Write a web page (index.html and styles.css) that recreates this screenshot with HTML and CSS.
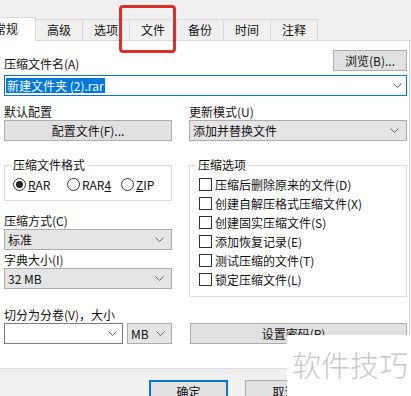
FILE: index.html
```html
<!DOCTYPE html>
<html lang="zh-CN">
<head>
    <meta charset="UTF-8">
    <title>压缩文件名和参数</title>
    <link rel="stylesheet" href="styles.css">
</head>
<body>

<div class="dialog">
    <div class="tabs">
        <div class="tab active">常规</div>
        <div class="tab">高级</div>
        <div class="tab">选项</div>
        <div class="tab">文件</div>
        <div class="tab">备份</div>
        <div class="tab">时间</div>
        <div class="tab">注释</div>
    </div>

    <div class="panel">
        <div class="name-row">
            <span class="lbl">压缩文件名(A)</span>
            <button class="btn browse">浏览(B)...</button>
        </div>
        <div class="combo name-combo">
            <span class="selected">新建文件夹 (2).rar</span>
            <svg class="chev" width="9" height="5" viewBox="0 0 9 5"><path d="M0.5 0.5 L4.5 4.5 L8.5 0.5"/></svg>
        </div>

        <div class="cols">
            <div class="col">
                <span class="lbl">默认配置</span>
                <button class="btn ctl">配置文件(F)...</button>

                <fieldset class="group group-format">
                    <legend>压缩文件格式</legend>
                    <div class="radios">
                        <label class="radio-item"><span class="radio checked"></span><span><u>R</u>AR</span></label>
                        <label class="radio-item"><span class="radio"></span><span>RAR<u>4</u></span></label>
                        <label class="radio-item"><span class="radio"></span><span><u>Z</u>IP</span></label>
                    </div>
                </fieldset>

                <span class="lbl gap-big">压缩方式(C)</span>
                <div class="select ctl">标准<svg class="chev" width="9" height="5" viewBox="0 0 9 5"><path d="M0.5 0.5 L4.5 4.5 L8.5 0.5"/></svg></div>

                <span class="lbl gap-small">字典大小(I)</span>
                <div class="select ctl">32 MB<svg class="chev" width="9" height="5" viewBox="0 0 9 5"><path d="M0.5 0.5 L4.5 4.5 L8.5 0.5"/></svg></div>
            </div>

            <div class="col">
                <span class="lbl">更新模式(U)</span>
                <div class="select ctl">添加并替换文件<svg class="chev" width="9" height="5" viewBox="0 0 9 5"><path d="M0.5 0.5 L4.5 4.5 L8.5 0.5"/></svg></div>

                <fieldset class="group group-options">
                    <legend>压缩选项</legend>
                    <label class="check-row"><span class="check"></span>压缩后删除原来的文件(D)</label>
                    <label class="check-row"><span class="check"></span>创建自解压格式压缩文件(X)</label>
                    <label class="check-row"><span class="check"></span>创建固实压缩文件(S)</label>
                    <label class="check-row"><span class="check"></span>添加恢复记录(E)</label>
                    <label class="check-row"><span class="check"></span>测试压缩的文件(T)</label>
                    <label class="check-row"><span class="check"></span>锁定压缩文件(L)</label>
                </fieldset>
            </div>
        </div>

        <span class="lbl split-label">切分为分卷(V)，大小</span>
        <div class="split-row">
            <div class="combo split-combo">
                <svg class="chev" width="9" height="5" viewBox="0 0 9 5"><path d="M0.5 0.5 L4.5 4.5 L8.5 0.5"/></svg>
            </div>
            <div class="select unit">MB<svg class="chev" width="9" height="5" viewBox="0 0 9 5"><path d="M0.5 0.5 L4.5 4.5 L8.5 0.5"/></svg></div>
            <button class="btn password">设置密码(P)...</button>
        </div>
    </div>

    <div class="footer">
        <button class="btn ok">确定</button>
        <button class="btn cancel">取消</button>
    </div>

    <div class="highlight"></div>
    <div class="watermark">软件技巧</div>
</div>

</body>
</html>
```

FILE: styles.css
```css
body { margin: 0; background: #f0f0f0; font-family: "Noto Sans CJK SC", "Noto Sans", sans-serif; font-size: 12px; color: #111; overflow: hidden; }
.dialog { position: relative; width: 411px; height: 396px; overflow: hidden; }

/* tab strip */
.tabs { display: flex; align-items: flex-end; height: 41px; box-sizing: border-box; border-bottom: 1px solid #d9d9d9; }
.tab { height: 21px; box-sizing: border-box; padding: 0 11px; margin-left: -1px; line-height: 20px; border: 1px solid #d9d9d9; border-bottom: none; background: #f0f0f0; }
.tab.active { position: relative; z-index: 1; height: 24px; margin: 0 0 -1px -20px; padding: 0 17px 0 13px; line-height: 22px; background: #fff; }

/* panel */
.panel { height: 328px; box-sizing: border-box; margin-right: 1px; padding: 9px 2px 0 4px; background: #fff; border-right: 1px solid #d9d9d9; border-bottom: 1px solid #dcdcdc; }
.lbl { display: block; line-height: 14px; white-space: nowrap; }
.name-row { display: flex; justify-content: space-between; align-items: flex-end; }
.btn { display: block; box-sizing: border-box; height: 21px; padding: 0; font: inherit; color: #111; background: #e1e1e1; border: 1px solid #adadad; }
.browse { width: 74px; }

.combo { display: flex; align-items: center; justify-content: space-between; box-sizing: border-box; height: 21px; background: #fff; border: 1px solid #7a7a7a; padding: 0 5px 0 1px; }
.name-combo { margin-top: 4px; border-color: #0078d7; padding-right: 4px; }
.selected { line-height: 15px; padding: 0 1px; background: #0078d7; color: #fff; }
.chev { flex: none; }
.chev path { fill: none; stroke: #606060; stroke-width: 1; }

.cols { display: grid; grid-template-columns: 168px 218px; column-gap: 17px; align-items: start; margin-top: 9px; }
.col { display: flex; flex-direction: column; }
.ctl { width: 100%; margin-top: 1px; }
.select { display: flex; align-items: center; justify-content: space-between; box-sizing: border-box; height: 21px; padding: 0 7px 0 3px; background: #e5e5e5; border: 1px solid #acacac; }
.gap-big { margin-top: 13px; }
.gap-small { margin-top: 3px; }

/* group boxes */
.group { margin: 17px 0 0; padding: 3px 6px 6px; border: 1px solid #dcdcdc; min-width: 0; }
.group legend { padding: 0 2px; line-height: 14px; }
.group-options { padding-bottom: 7px; }
.radios { display: flex; align-items: center; height: 19px; padding-left: 2px; }
.radio-item { display: flex; align-items: center; gap: 2px; flex: none; width: 54px; }
.radio { position: relative; flex: none; width: 13px; height: 13px; box-sizing: border-box; border: 1px solid #333; border-radius: 50%; background: #fff; }
.radio.checked::after { content: ""; position: absolute; left: 2px; top: 2px; width: 7px; height: 7px; border-radius: 50%; background: #222; }
.check-row { display: flex; align-items: center; gap: 3px; height: 19px; padding-left: 3px; white-space: nowrap; }
.check { width: 13px; height: 13px; box-sizing: border-box; border: 1px solid #333; background: #fff; flex: none; }

/* volume split row */
.split-label { margin-top: 11px; }
.split-row { display: flex; margin-top: 1px; }
.split-combo { width: 119px; justify-content: flex-end; }
.unit { width: 45px; margin-left: 4px; padding-right: 6px; }
.password { width: 217px; margin-left: 18px; }

/* footer */
.footer { display: flex; padding: 11px 0 0 149px; }
.ok, .cancel { width: 79px; height: 23px; }
.ok { border: 2px solid #0078d7; }
.cancel { margin-left: 17px; }

/* overlays */
.highlight { position: absolute; left: 119px; top: 5px; width: 57px; height: 48px; box-sizing: border-box; border: 3px solid #dc2f2a; border-radius: 4px; }
.watermark { position: absolute; right: 0; bottom: 0; width: 124px; height: 61px; box-sizing: border-box; padding-left: 5px; background: #fff; color: #c8c8c8; font-size: 29px; font-weight: 300; line-height: 58px; white-space: nowrap; }
```
